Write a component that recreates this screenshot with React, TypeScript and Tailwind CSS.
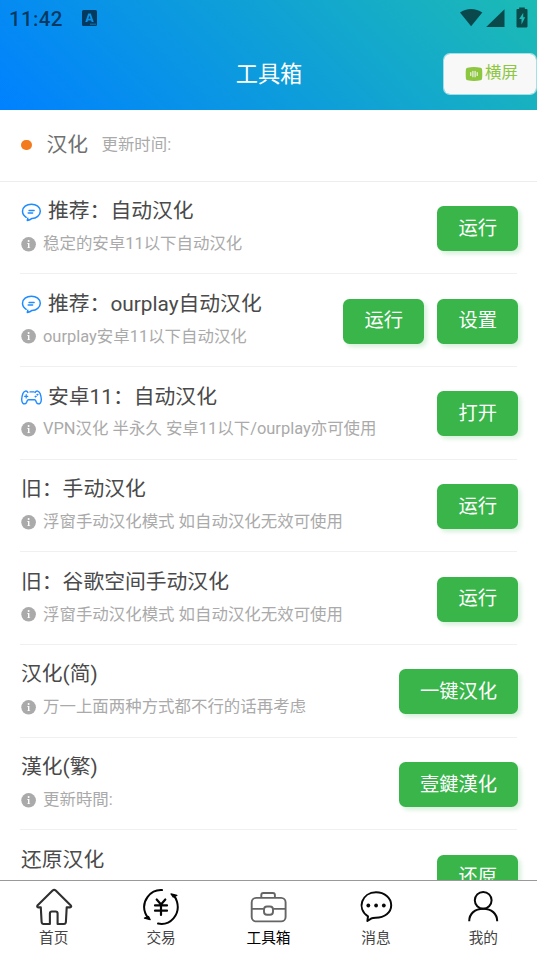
import React from "react";

type IconKind = "chat" | "game";

interface Row {
  icon?: IconKind;
  title: string;
  note?: string;
  actions: string[];
}

const rows: Row[] = [
  { icon: "chat", title: "推荐：自动汉化", note: "稳定的安卓11以下自动汉化", actions: ["运行"] },
  { icon: "chat", title: "推荐：ourplay自动汉化", note: "ourplay安卓11以下自动汉化", actions: ["运行", "设置"] },
  { icon: "game", title: "安卓11：自动汉化", note: "VPN汉化 半永久 安卓11以下/ourplay亦可使用", actions: ["打开"] },
  { title: "旧：手动汉化", note: "浮窗手动汉化模式 如自动汉化无效可使用", actions: ["运行"] },
  { title: "旧：谷歌空间手动汉化", note: "浮窗手动汉化模式 如自动汉化无效可使用", actions: ["运行"] },
  { title: "汉化(简)", note: "万一上面两种方式都不行的话再考虑", actions: ["一键汉化"] },
  { title: "漢化(繁)", note: "更新時間:", actions: ["壹鍵漢化"] },
  { title: "还原汉化", actions: ["还原"] },
];

function ChatIcon() {
  return (
    <svg className="mr-[6px] h-[20px] w-[21px] shrink-0" viewBox="0 0 21 20" fill="none" stroke="#1e8cff" strokeWidth="1.5" strokeLinecap="round" strokeLinejoin="round">
      <path d="M5.2 15.3C2.9 13.9 1.5 11.8 1.5 9.3c0-4.1 4-7.1 8.9-7.1s8.9 3 8.9 7.1-4 7.1-8.3 7.1c-1.5 1.3-3.2 1.9-4.7 2.1l.5-2.3" />
      <path d="M8.1 8.4h5M7.200 11h4.400" />
    </svg>
  );
}

function GameIcon() {
  return (
    <svg className="mr-[6px] h-[20px] w-[21px] shrink-0" viewBox="0 0 21 20" fill="none" stroke="#1e8cff" strokeWidth="1.4" strokeLinecap="round" strokeLinejoin="round">
      <path d="M6.800 5.400C5.700 3.200 3 3.700 1.900 6.600.7 10 .5 14.600 1.900 16.200c1.100 1.200 2.900.6 3.700-.9.800-1.600.4-2.600 1.900-2.600h6c1.500 0 1.100 1 1.900 2.600.8 1.500 2.600 2.100 3.700.9 1.400-1.600 1.200-6.200 0-9.600-1.100-2.900-3.800-3.400-4.900-1.200M9 4.900h4" />
      <path d="M3.600 9.300h3.200M5.200 7.700v3.200" strokeWidth="1.200" />
      <circle cx="16.300" cy="7.700" r=".6" fill="#1e8cff" stroke="#1e8cff" strokeWidth=".8" />
      <circle cx="14.500" cy="9.600" r=".6" fill="#1e8cff" stroke="#1e8cff" strokeWidth=".8" />
    </svg>
  );
}

function InfoIcon() {
  return (
    <svg className="mr-[7px] h-[15px] w-[15px] shrink-0" viewBox="0 0 15 15">
      <circle cx="7.600" cy="7.300" r="7.300" fill="#aaa" />
      <circle cx="7.600" cy="3.900" r="1" fill="#fff" />
      <path d="M6.200 6h2.200v4.400h.8v.7h-3v-.7H7V6.700h-.8z" fill="#fff" />
    </svg>
  );
}

function StatusBar() {
  return (
    <div className="flex h-[36px] items-center text-black/60">
      <span className="ml-[9px] w-[73px] pt-[1px] text-[20.600px] leading-[36px] font-medium tracking-[0.300px]">11:42</span>
      <svg className="h-[16px] w-[15px]" viewBox="0 0 15 16">
        <path
          fill="currentColor"
          fillRule="evenodd"
          d="M1.500 0h12Q15 0 15 1.500v13q0 1.500-1.500 1.500h-12Q0 16 0 14.500v-13Q0 0 1.500 0zM6.200 3.500 3.300 12h2.100l.5-1.600h3.200l.5 1.600h2.100L8.800 3.500zM6.400 8.800l1.100-3.300 1.100 3.300zM8 14.600h6v-.9H8z"
        />
      </svg>
      <div className="mr-[9px] ml-auto flex items-center">
        <svg className="h-[22px] w-[46px]" viewBox="0 0 46 22" fill="currentColor">
          <path d="M0 5.500C6.300.7 15.700.7 22.300 5.500L11.100 19.300z" />
          <path d="M44.500 2.200v17.900H26.200z" />
        </svg>
        <svg className="ml-[10px] h-[22px] w-[12px]" viewBox="0 0 12 22" fill="currentColor">
          <path
            fillRule="evenodd"
            d="M3.200.6h5.600v1.500h1.900q.8 0 .8.8v16.700q0 .8-.8.8H1.300q-.8 0-.8-.8V2.900q0-.8.8-.8h1.900zM7.200 5.700 3.200 12h2.300v5.600L9.200 10.200H7.200z"
          />
        </svg>
      </div>
    </div>
  );
}

function TabBar() {
  const svg = "h-[38px] w-[38px] shrink-0";
  const tab = "flex flex-1 flex-col items-center pt-[7px] text-[14.700px] leading-[24px] text-[#444]";
  return (
    <nav className="flex h-[76px] shrink-0 border-t border-[#999] bg-white">
      <div className={tab}>
        <svg className={svg} viewBox="0 0 38 38" fill="none" stroke="#303030" strokeWidth="2.100" strokeLinejoin="round" strokeLinecap="round">
          <path d="M17.600 2.500 2.700 17.200q-1.300 1.800.7 2.200h2.400L6.600 34q.2 2 2 2h6.300V25.500q0-2 2-2h3.700q2 0 2 2V36h6.300q1.800 0 2-2l.8-14.600h3.100q2.300-.4.800-2.100L20.700 2.500q-1.500-1.300-3.100 0z" />
        </svg>
        <span>首页</span>
      </div>
      <div className={tab}>
        <svg className={svg} viewBox="0 0 38 38" fill="none" stroke="#050505" strokeWidth="2" strokeLinecap="round" strokeLinejoin="round">
          <path d="M20 2.100C8.500 1.400-1.200 13.200 3.300 25.200q1 2.700 3 5M16 35.600C28.500 38 38.500 26.500 35 13.800q-1-3.700-3.600-6.800" />
          <path d="M2.500 30.200 8.200 31.700 6.500 28.500zM29 5.900 34.800 7.500 31.300 9z" fill="#050505" strokeWidth="1.300" />
          <path d="m14.700 11.500 4.300 5 4.300-5M13 17.400h12M13 22.700h12M19 17v10" strokeWidth="2.200" />
        </svg>
        <span>交易</span>
      </div>
      <div className={tab}>
        <svg className={svg} viewBox="1 0 38 38" fill="none" stroke="#656565" strokeWidth="1.900">
          <path d="M12.300 9.500V7q0-2 2-2h9.600q2 0 2 2v2.500" />
          <rect x="2.700" y="9.900" width="33.900" height="23.500" rx="4.500" />
          <path d="M2.700 20.900h12M24.200 20.900h12" />
          <rect x="15" y="18.500" width="9" height="8.300" rx="3" />
        </svg>
        <span className="text-black">工具箱</span>
      </div>
      <div className={tab}>
        <svg className={svg} viewBox="0 0 38 38" fill="none" stroke="#080808" strokeWidth="2" strokeLinejoin="round">
          <path d="M11 28.300C-1 20.500 5 4.300 19 4.300c8.500 0 15.200 5.600 15.200 13S27.500 29.700 18.700 29.700q-3 0-4.200.7L10.400 33z" />
          <circle cx="11.300" cy="17.500" r="1.900" fill="#080808" stroke="none" />
          <circle cx="19.100" cy="17.500" r="1.900" fill="#080808" stroke="none" />
          <circle cx="26.800" cy="17.500" r="1.900" fill="#080808" stroke="none" />
        </svg>
        <span>消息</span>
      </div>
      <div className={tab}>
        <svg className={svg} viewBox="0 0 38 38" fill="none" stroke="#080808" strokeWidth="2">
          <circle cx="19.200" cy="12.300" r="8.400" />
          <path d="M5.200 33.300C5.200 25.500 11 20.800 19.200 20.800S33.200 25.500 33.200 33.300" />
        </svg>
        <span>我的</span>
      </div>
    </nav>
  );
}

export default function App() {
  return (
    <div className="flex h-[956px] w-[537px] flex-col overflow-hidden bg-white font-[Roboto,'Noto_Sans_CJK_SC',sans-serif]">
      <header className="h-[110.400px] shrink-0 bg-[linear-gradient(45deg,#0081ff,#1cbbb4)]">
        <StatusBar />
        <div className="grid h-[75px] grid-cols-[1fr_auto_1fr] items-center">
          <span />
          <h1 className="ml-[1px] text-[22.200px] leading-[32px] text-white">工具箱</h1>
          <div className="flex h-[42px] w-[94px] items-center justify-self-end rounded-[7px] border border-white/60 bg-[#f8f8f8] bg-clip-padding pl-[21px] text-[16.400px] text-[#8dc63f]">
            <svg className="mr-[2px] h-[14px] w-[18px] shrink-0" viewBox="0 0 18 14">
              <path fill="#8dc63f" d="M2.500.7Q9-.5 15.500.7q1.500.3 1.600 1.800.4 4.500 0 9-.1 1.500-1.600 1.800-6.500 1.200-13 0-1.500-.3-1.600-1.800-.4-4.500 0-9Q1 .9 2.500.7z" />
              <path d="M5.800 5.600v2.800M7.900 4.200v5.600M10.100 4.200v5.600M12.200 5.600v2.800" stroke="#f8f8f8" strokeWidth="1.100" strokeLinecap="round" />
            </svg>
            <span className="whitespace-nowrap">横屏</span>
          </div>
        </div>
      </header>

      <section className="flex h-[71.400px] shrink-0 items-center border-b border-[#ededed] pb-[1px] pl-[21px]">
        <span className="h-[10.500px] w-[10.500px] rounded-full bg-[#f37b1d]" />
        <h2 className="ml-[15px] text-[20.800px] leading-[30px] text-[#707070]">汉化</h2>
        <span className="ml-[13.500px] text-[16.400px] text-[#aaa]">更新时间:</span>
      </section>

      <main className="min-h-0 flex-1 overflow-hidden px-[20px]">
        {rows.map((row) => (
          <div key={row.title} className="flex h-[92.670px] items-center border-b border-[#f0f0f0]">
            <div className="flex h-full min-w-0 flex-1 flex-col pt-[14px] pl-[1px]">
              <div className="flex h-[32px] items-center text-[20.800px] whitespace-nowrap text-[#4a4a4a]">
                {row.icon === "chat" && <ChatIcon />}
                {row.icon === "game" && <GameIcon />}
                <span>{row.title}</span>
              </div>
              {row.note && (
                <div className="mt-[4.500px] flex h-[24px] items-center text-[16.450px] whitespace-nowrap text-[#aaa]">
                  <InfoIcon />
                  <span>{row.note}</span>
                </div>
              )}
            </div>
            <div className="mt-[2px] mr-[-1px] flex gap-[13.500px]">
              {row.actions.map((label) => (
                <button
                  key={label}
                  className="h-[45px] rounded-[6.500px] bg-[#39b54a] px-[21px] text-[19.300px] leading-[44px] text-white shadow-[3px_3px_4px_rgba(57,181,74,0.2)]"
                >
                  {label}
                </button>
              ))}
            </div>
          </div>
        ))}
      </main>

      <TabBar />
    </div>
  );
}
